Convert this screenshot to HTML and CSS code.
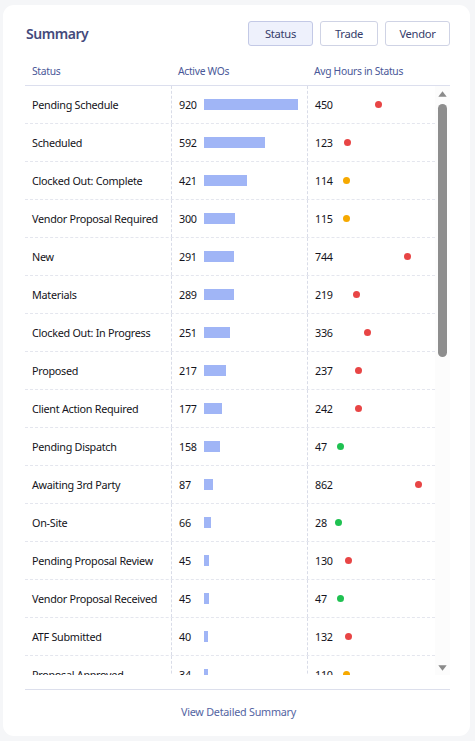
FILE: index.html
```html
<!DOCTYPE html>
<html>
<head>
<meta charset="utf-8">
<link rel="stylesheet" href="styles.css">
</head>
<body>
<div class="card">
  <div class="top">
    <h2 class="title">Summary</h2>
    <div class="tabs">
      <button class="tab active">Status</button>
      <button class="tab">Trade</button>
      <button class="tab">Vendor</button>
    </div>
  </div>
  <div class="thead">
    <div class="th">Status</div>
    <div class="th">Active WOs</div>
    <div class="th">Avg Hours in Status</div>
  </div>
  <div class="body">
    <div class="scroll">
      <div class="row"><div class="c1">Pending Schedule</div><div class="c2"><span class="num">920</span><span class="bar" style="width:94px"></span></div><div class="c3"><span class="num">450</span><span class="dot red" style="left:70.8px"></span></div></div>
      <div class="row"><div class="c1">Scheduled</div><div class="c2"><span class="num">592</span><span class="bar" style="width:60.5px"></span></div><div class="c3"><span class="num">123</span><span class="dot red" style="left:39.4px"></span></div></div>
      <div class="row"><div class="c1">Clocked Out: Complete</div><div class="c2"><span class="num">421</span><span class="bar" style="width:43px"></span></div><div class="c3"><span class="num">114</span><span class="dot orange" style="left:38.5px"></span></div></div>
      <div class="row"><div class="c1">Vendor Proposal Required</div><div class="c2"><span class="num">300</span><span class="bar" style="width:30.7px"></span></div><div class="c3"><span class="num">115</span><span class="dot orange" style="left:38.6px"></span></div></div>
      <div class="row"><div class="c1">New</div><div class="c2"><span class="num">291</span><span class="bar" style="width:29.7px"></span></div><div class="c3"><span class="num">744</span><span class="dot red" style="left:99px"></span></div></div>
      <div class="row"><div class="c1">Materials</div><div class="c2"><span class="num">289</span><span class="bar" style="width:29.5px"></span></div><div class="c3"><span class="num">219</span><span class="dot red" style="left:48.6px"></span></div></div>
      <div class="row"><div class="c1">Clocked Out: In Progress</div><div class="c2"><span class="num">251</span><span class="bar" style="width:25.6px"></span></div><div class="c3"><span class="num">336</span><span class="dot red" style="left:59.9px"></span></div></div>
      <div class="row"><div class="c1">Proposed</div><div class="c2"><span class="num">217</span><span class="bar" style="width:22.2px"></span></div><div class="c3"><span class="num">237</span><span class="dot red" style="left:50.4px"></span></div></div>
      <div class="row"><div class="c1">Client Action Required</div><div class="c2"><span class="num">177</span><span class="bar" style="width:18.1px"></span></div><div class="c3"><span class="num">242</span><span class="dot red" style="left:50.8px"></span></div></div>
      <div class="row"><div class="c1">Pending Dispatch</div><div class="c2"><span class="num">158</span><span class="bar" style="width:16.1px"></span></div><div class="c3"><span class="num">47</span><span class="dot green" style="left:32.1px"></span></div></div>
      <div class="row"><div class="c1">Awaiting 3rd Party</div><div class="c2"><span class="num">87</span><span class="bar" style="width:8.9px"></span></div><div class="c3"><span class="num">862</span><span class="dot red" style="left:110.4px"></span></div></div>
      <div class="row"><div class="c1">On-Site</div><div class="c2"><span class="num">66</span><span class="bar" style="width:6.7px"></span></div><div class="c3"><span class="num">28</span><span class="dot green" style="left:30.3px"></span></div></div>
      <div class="row"><div class="c1">Pending Proposal Review</div><div class="c2"><span class="num">45</span><span class="bar" style="width:4.6px"></span></div><div class="c3"><span class="num">130</span><span class="dot red" style="left:40.1px"></span></div></div>
      <div class="row"><div class="c1">Vendor Proposal Received</div><div class="c2"><span class="num">45</span><span class="bar" style="width:4.6px"></span></div><div class="c3"><span class="num">47</span><span class="dot green" style="left:32.1px"></span></div></div>
      <div class="row"><div class="c1">ATF Submitted</div><div class="c2"><span class="num">40</span><span class="bar" style="width:4.1px"></span></div><div class="c3"><span class="num">132</span><span class="dot red" style="left:40.3px"></span></div></div>
      <div class="row"><div class="c1">Proposal Approved</div><div class="c2"><span class="num">34</span><span class="bar" style="width:3.5px"></span></div><div class="c3"><span class="num">110</span><span class="dot orange" style="left:38.2px"></span></div></div>
    </div>
    <div class="sbar">
      <div class="arrow"><svg width="9" height="6" viewBox="0 0 9 6"><path d="M4.5 0.3 L8.7 5.7 L0.3 5.7 Z" fill="#8a8a8a"/></svg></div>
      <div class="track"><div class="thumb"></div></div>
      <div class="arrow"><svg width="9" height="6" viewBox="0 0 9 6"><path d="M0.3 0.3 L8.7 0.3 L4.5 5.7 Z" fill="#8a8a8a"/></svg></div>
    </div>
  </div>
  <div class="footer"><a class="link">View Detailed Summary</a></div>
</div>
</body>
</html>
```

FILE: styles.css
```css
* { box-sizing: border-box; }
html, body { margin: 0; padding: 0; }
body {
  background: #f5f6f8;
  font-family: "Noto Sans", "Open Sans", sans-serif;
  width: 475px;
  height: 741px;
  overflow: hidden;
}
.card {
  margin: 5px 5px 0 3px;
  height: 731px;
  background: #ffffff;
  border-radius: 11px;
  padding: 16px 20px 0 22px;
  display: flex;
  flex-direction: column;
}
.top {
  display: flex;
  align-items: center;
  justify-content: space-between;
  height: 25px;
  margin-bottom: 11px;
}
.title {
  margin: 0 0 0 1px;
  font-size: 14px;
  font-weight: 600;
  letter-spacing: -0.45px;
  color: #444a7c;
}
.tabs { display: flex; gap: 7px; }
.tab {
  height: 25px;
  border: 1px solid #cfd3e5;
  background: #fff;
  border-radius: 3px;
  font-family: inherit;
  font-size: 11.2px;
  letter-spacing: -0.3px;
  color: #353c6a;
  padding: 0;
  cursor: pointer;
}
.tab:nth-child(1) { width: 65px; }
.tab:nth-child(2) { width: 58px; }
.tab:nth-child(3) { width: 65px; }
.tab.active { background: #eef1fc; border-color: #c3c9e6; }
.thead {
  display: grid;
  grid-template-columns: 146px 136px 1fr;
  height: 29px;
  border-bottom: 1.5px solid #dcdfee;
  align-items: center;
}
.th {
  padding-left: 7px;
  font-size: 10.3px;
  letter-spacing: -0.3px;
  color: #4a5898;
}
.body {
  display: flex;
  height: 589px;
  flex: none;
}
.scroll {
  flex: 1;
  overflow: hidden;
}
.sbar {
  width: 15px;
  flex: none;
  background: #fcfcfc;
  display: flex;
  flex-direction: column;
}
.arrow {
  height: 15px;
  display: flex;
  align-items: center;
  justify-content: center;
  flex: none;
}
.arrow svg { display: block; }
.track {
  flex: 1;
  padding: 3px 0 0 3px;
}
.thumb {
  width: 9px;
  height: 253px;
  background: #8d8d8d;
  border-radius: 4.5px;
}
.row {
  display: grid;
  grid-template-columns: 146px 136px 1fr;
  height: 38px;
  border-bottom: 1px dashed #e4e6ee;
  font-size: 10.8px;
  letter-spacing: -0.28px;
  color: #141420;
}
.row > div {
  display: flex;
  align-items: center;
  padding-left: 7px;
}
.c2, .c3 { border-left: 1px dashed #d9dce8; }
.c2 .num { width: 25px; }
.bar {
  height: 11px;
  background: #a0b5f6;
}
.c3 { position: relative; }
.dot {
  position: absolute;
  top: 50%;
  width: 7px;
  height: 7px;
  margin-top: -4px;
  margin-left: -3.5px;
  border-radius: 50%;
}
.red { background: #e84545; }
.orange { background: #f6a900; }
.green { background: #1fc151; }
.footer {
  margin-top: 14px;
  border-top: 1.5px solid #dcdfec;
  text-align: center;
  padding-top: 9px;
}
.link {
  font-size: 10.8px;
  letter-spacing: -0.25px;
  color: #5364a2;
  margin-left: 2px;
}
```
